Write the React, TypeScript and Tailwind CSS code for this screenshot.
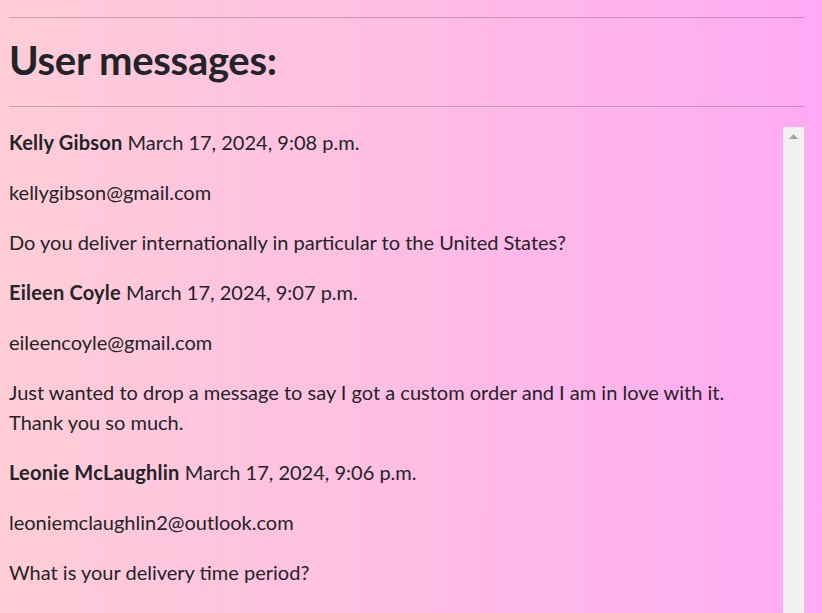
import React from 'react'

const messages = [
  {
    name: 'Kelly Gibson',
    date: 'March 17, 2024, 9:08 p.m.',
    email: 'kellygibson@gmail.com',
    body: 'Do you deliver internationally in particular to the United States?',
  },
  {
    name: 'Eileen Coyle',
    date: 'March 17, 2024, 9:07 p.m.',
    email: 'eileencoyle@gmail.com',
    body: 'Just wanted to drop a message to say I got a custom order and I am in love with it. Thank you so much.',
  },
  {
    name: 'Leonie McLaughlin',
    date: 'March 17, 2024, 9:06 p.m.',
    email: 'leoniemclaughlin2@outlook.com',
    body: 'What is your delivery time period?',
  },
]

export default function App() {
  return (
    <div className="h-[613px] overflow-hidden bg-gradient-to-r from-[#ffcdd6] via-[#ffbde4] to-[#ffaaf5] pl-[9px] pr-[18px] pt-[17px] text-[#212529] font-['Lato',sans-serif]">
      <hr className="border-t border-[#212529]/25" />
      <h1 className="mt-[18px] mb-[22px] text-[40px] leading-[48px] font-bold tracking-[-0.3px]">
        User messages:
      </h1>
      <hr className="border-t border-[#212529]/25" />

      <div className="mt-[20px] flex h-[486px]">
        <div className="flex-1 overflow-hidden text-[20px] leading-[30px]">
          {messages.map((m) => (
            <div key={m.email}>
              <p className="mb-5">
                <strong className="font-bold tracking-[0.2px]">{m.name}</strong> {m.date}
              </p>
              <p className="mb-5">{m.email}</p>
              <p className="mb-5 pr-10">{m.body}</p>
            </div>
          ))}
        </div>
        <div className="flex w-[21px] shrink-0 justify-center bg-[#f1f1f1] pt-[7px]">
          <svg width="9" height="5" viewBox="0 0 9 5">
            <path d="M4.5 0 L9 5 L0 5 Z" fill="#a3a3a3" />
          </svg>
        </div>
      </div>
    </div>
  )
}
